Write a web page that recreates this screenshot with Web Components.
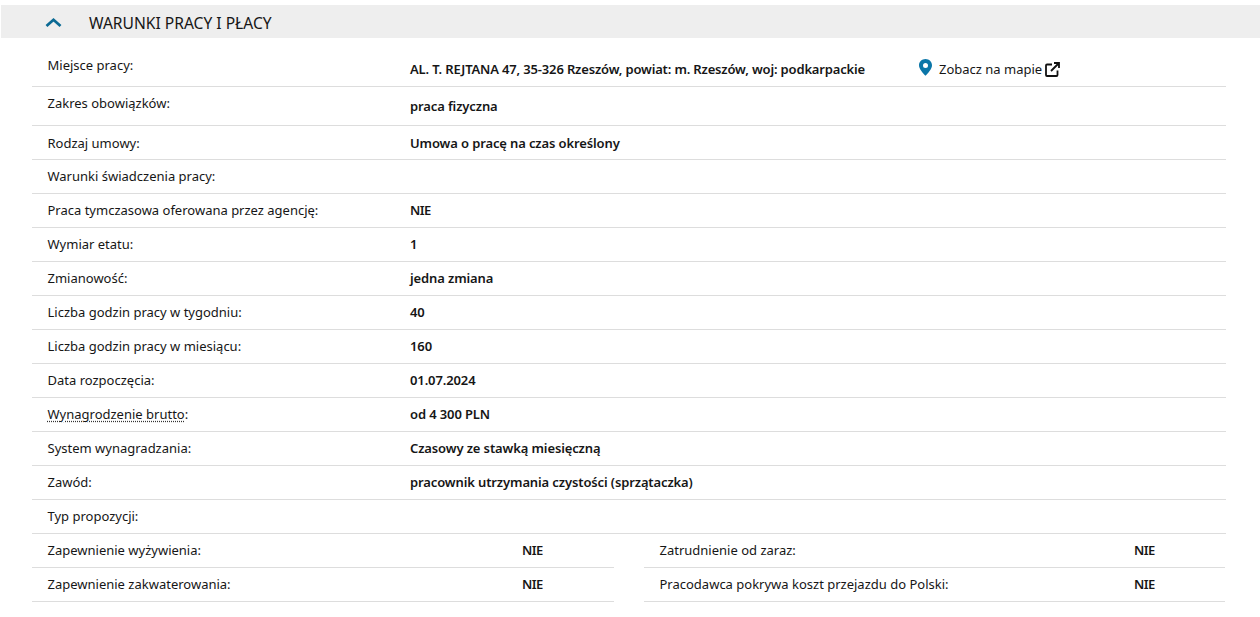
<!DOCTYPE html>
<html lang="pl"><head><meta charset="utf-8"><title>Warunki pracy i płacy</title>
<style>html,body{margin:0;background:#fff}body{font-family:"Noto Sans","Open Sans",sans-serif;color:#161616}</style></head>
<body>
<job-section heading="WARUNKI PRACY I PŁACY">
<job-row h="49" ly="18" vy="22" ls="-.16" label="Miejsce pracy:" value="AL. T. REJTANA 47, 35-326 Rzeszów, powiat: m. Rzeszów, woj: podkarpackie"><map-link></map-link></job-row>
<job-row h="39" ly="7" vy="10" label="Zakres obowiązków:" value="praca fizyczna"></job-row>
<job-row h="34" ly="8" vy="8" label="Rodzaj umowy:" value="Umowa o pracę na czas określony"></job-row>
<job-row h="34" label="Warunki świadczenia pracy:"></job-row>
<job-row h="34" ls="-.6" label="Praca tymczasowa oferowana przez agencję:" value="NIE"></job-row>
<job-row h="34" label="Wymiar etatu:" value="1"></job-row>
<job-row h="34" label="Zmianowość:" value="jedna zmiana"></job-row>
<job-row h="34" label="Liczba godzin pracy w tygodniu:" value="40"></job-row>
<job-row h="34" label="Liczba godzin pracy w miesiącu:" value="160"></job-row>
<job-row h="34" label="Data rozpoczęcia:" value="01.07.2024"></job-row>
<job-row h="34" dotted label="Wynagrodzenie brutto" value="od 4 300 PLN"></job-row>
<job-row h="34" label="System wynagradzania:" value="Czasowy ze stawką miesięczną"></job-row>
<job-row h="34" label="Zawód:" value="pracownik utrzymania czystości (sprzątaczka)"></job-row>
<job-row h="34" label="Typ propozycji:"></job-row>
<half-grid>
<half-row label="Zapewnienie wyżywienia:" value="NIE"></half-row>
<half-row label="Zatrudnienie od zaraz:" value="NIE"></half-row>
<half-row label="Zapewnienie zakwaterowania:" value="NIE"></half-row>
<half-row label="Pracodawca pokrywa koszt przejazdu do Polski:" value="NIE"></half-row>
</half-grid>
</job-section>
<script>
const FONT=':host{font-size:13px;line-height:18px}';
class JobSection extends HTMLElement{connectedCallback(){if(this.shadowRoot)return;
this.attachShadow({mode:'open'}).innerHTML=`<style>
:host{display:block;padding:5px 0 0 1px}
header{height:33px;background:#eee;display:flex;align-items:center;padding-left:44px;gap:27px;font-size:15.600px}
svg{width:17px;height:11px;flex:none;margin-top:2px}
h2{all:unset;position:relative;top:1px}
main{display:block;padding:0 34px 0 31px}
</style><header><svg viewBox="0 0 17 11"><path d="M1.500 9 8.500 2.800 15.500 9" fill="none" stroke="#0b6a94" stroke-width="2.800"/></svg><h2></h2></header><main><slot></slot></main>`;
this.shadowRoot.querySelector('h2').textContent=this.getAttribute('heading');}}
class JobRow extends HTMLElement{connectedCallback(){if(this.shadowRoot)return;
const a=n=>this.getAttribute(n);
this.attachShadow({mode:'open'}).innerHTML=`<style>${FONT}
:host{display:grid;grid-template-columns:362.500px 509px 1fr;box-sizing:border-box;border-bottom:1px solid #ddd;height:${a('h')}px;padding-left:15.500px}
.l{padding-top:${a('ly')||7}px}
.v{padding-top:${a('vy')||7}px;font-weight:600;white-space:nowrap;letter-spacing:${a('ls')||'-.12'}px}
u{text-decoration:underline dotted #333;text-underline-offset:2px}
::slotted(*){margin-top:${(+a('vy')||7)}px}
</style><div class="l"></div><div class="v"></div><slot></slot>`;
const l=this.shadowRoot.querySelector('.l');
if(this.hasAttribute('dotted')){const u=document.createElement('u');u.textContent=a('label');l.append(u,':');}else l.textContent=a('label');
this.shadowRoot.querySelector('.v').textContent=a('value')||'';}}
class MapLink extends HTMLElement{connectedCallback(){if(this.shadowRoot)return;
this.attachShadow({mode:'open'}).innerHTML=`<style>${FONT}
:host{display:flex;align-items:center;height:18px;white-space:nowrap}
.p{width:13px;height:17px;margin-right:7px;margin-top:-4px}.e{width:15px;height:15px;margin-left:3px}
</style><svg class="p" viewBox="0 0 13 17"><path fill-rule="evenodd" fill="#0b76a8" d="M6.500 0C2.900 0 0 2.800 0 6.300 0 10 3.800 14 6.500 16.800 9.200 14 13 10 13 6.300 13 2.800 10.100 0 6.500 0ZM6.500 3.900a2.500 2.500 0 1 1 0 5 2.500 2.500 0 0 1 0-5Z"/></svg><span>Zobacz na mapie</span><svg class="e" viewBox="0 0 15 15" fill="none" stroke="#111" stroke-width="1.800"><path d="M7 2.500H2a1 1 0 0 0-1 1V13a1 1 0 0 0 1 1h9.500a1 1 0 0 0 1-1V8.500M6 9l7.500-7.500M9 1h5v5"/></svg>`;}}
class HalfGrid extends HTMLElement{connectedCallback(){if(this.shadowRoot)return;
this.attachShadow({mode:'open'}).innerHTML=`<style>:host{display:grid;grid-template-columns:582px 581px;column-gap:30px}</style><slot></slot>`;}}
class HalfRow extends HTMLElement{connectedCallback(){if(this.shadowRoot)return;
this.attachShadow({mode:'open'}).innerHTML=`<style>${FONT}
:host{display:grid;grid-template-columns:474.500px 1fr;box-sizing:border-box;height:34px;border-bottom:1px solid #ddd;padding:7px 0 0 15.500px}
.v{font-weight:600;letter-spacing:-.6px}</style><div></div><div class="v"></div>`;
const d=this.shadowRoot.querySelectorAll('div');d[0].textContent=this.getAttribute('label');d[1].textContent=this.getAttribute('value');}}
customElements.define('job-section',JobSection);customElements.define('job-row',JobRow);customElements.define('map-link',MapLink);customElements.define('half-grid',HalfGrid);customElements.define('half-row',HalfRow);
</script>
</body></html>
